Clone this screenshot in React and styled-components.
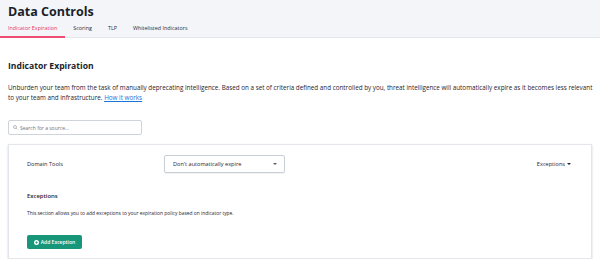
import React from 'react';
import styled, { createGlobalStyle } from 'styled-components';

const GlobalStyle = createGlobalStyle`
  body {
    margin: 0;
    background: #ffffff;
    font-family: "Open Sans", "Liberation Sans", sans-serif;
    color: #1f2430;
  }
`;

const Header = styled.header`
  background: #f3f5f9;
  border-bottom: 1px solid #e3e6eb;
  height: 38px;
  box-sizing: border-box;
  display: flex;
  flex-direction: column;
`;

const Title = styled.h1`
  margin: 0;
  padding: 3px 8px 0;
  height: 19px;
  font-size: 12.5px;
  line-height: 17px;
  font-weight: 700;
  color: #1b1f2a;
`;

const Tabs = styled.nav`
  display: flex;
  align-items: stretch;
  height: 16px;
  margin-top: auto;
`;

const Tab = styled.div`
  padding: 0 8px;
  font-size: 5.4px;
  line-height: 15px;
  color: ${p => (p.$active ? '#e8365d' : '#2a2f3a')};
  border-bottom: 2px solid ${p => (p.$active ? '#ef4d72' : 'transparent')};
  margin-bottom: -1px;
`;

const Main = styled.main`
  padding: 0 8px;
`;

const SectionTitle = styled.h2`
  margin: 22px 0 0;
  font-size: 8.6px;
  line-height: 12px;
  font-weight: 700;
  color: #1b1f2a;
`;

const Intro = styled.p`
  margin: 11px -4px 0 0;
  font-size: 6.3px;
  line-height: 10px;
  color: #1f2430;
`;

const Link = styled.a`
  color: #1a73d9;
  text-decoration: underline;
`;

const Search = styled.label`
  margin-top: 17px;
  width: 134px;
  height: 15px;
  box-sizing: border-box;
  border: 1px solid #cfd4db;
  border-radius: 2px;
  display: flex;
  align-items: center;
  gap: 2px;
  padding: 0 4px;
  font-size: 5px;
  color: #6b7280;
`;

const Card = styled.section`
  margin-top: 9px;
  width: 584px;
  height: 115px;
  box-sizing: border-box;
  border: 1px solid #e3e6ea;
  box-shadow: 0 1px 2px rgba(0, 0, 0, 0.18);
  padding: 10px 18px 0;
`;

const Row = styled.div`
  display: flex;
  align-items: center;
  height: 18px;
`;

const Label = styled.div`
  width: 137px;
  font-size: 5.6px;
  color: #1f2430;
`;

const Select = styled.div`
  width: 121px;
  height: 18px;
  box-sizing: border-box;
  border: 1px solid #c8ced6;
  border-radius: 2px;
  display: flex;
  align-items: center;
  justify-content: space-between;
  padding: 0 7px 0 8px;
  font-size: 5.6px;
  color: #1f2430;
  box-shadow: 0 1px 1px rgba(0, 0, 0, 0.06);
`;

const Caret = styled.span`
  width: 0;
  height: 0;
  border-left: 2px solid transparent;
  border-right: 2px solid transparent;
  border-top: 2px solid ${p => p.$color || '#555b66'};
`;

const Toggle = styled.div`
  margin-left: auto;
  margin-right: 2px;
  display: flex;
  align-items: center;
  gap: 2px;
  font-size: 5.6px;
  color: #1f2430;
`;

const SubTitle = styled.h3`
  margin: 19px 0 0;
  font-size: 5.9px;
  line-height: 9px;
  font-weight: 600;
  color: #1f2430;
`;

const SubText = styled.p`
  margin: 8px 0 0;
  font-size: 4.9px;
  line-height: 8px;
  color: #1f2430;
`;

const Button = styled.button`
  margin-top: 18px;
  height: 14px;
  width: 55px;
  box-sizing: border-box;
  border: none;
  border-radius: 2px;
  background: #17967a;
  color: #fff;
  font-family: inherit;
  font-size: 5px;
  font-weight: 600;
  display: flex;
  align-items: center;
  justify-content: center;
  gap: 2px;
  padding: 0;
`;

const PlusIcon = () => (
  <svg width="5" height="5" viewBox="0 0 10 10">
    <circle cx="5" cy="5" r="5" fill="#fff" />
    <path d="M5 2.5v5M2.5 5h5" stroke="#17967a" strokeWidth="1.5" />
  </svg>
);

const SearchIcon = () => (
  <svg width="5" height="5" viewBox="0 0 10 10">
    <circle cx="4" cy="4" r="3" fill="none" stroke="#8a9099" strokeWidth="1.2" />
    <path d="M6.3 6.3L9 9" stroke="#8a9099" strokeWidth="1.2" />
  </svg>
);

export default function App() {
  return (
    <>
      <GlobalStyle />
      <Header>
        <Title>Data Controls</Title>
        <Tabs>
          <Tab $active>Indicator Expiration</Tab>
          <Tab>Scoring</Tab>
          <Tab>TLP</Tab>
          <Tab>Whitelisted Indicators</Tab>
        </Tabs>
      </Header>
      <Main>
        <SectionTitle>Indicator Expiration</SectionTitle>
        <Intro>
          Unburden your team from the task of manually deprecating intelligence. Based on a set of criteria defined and
          controlled by you, threat intelligence will automatically expire as it becomes less relevant to your team and
          infrastructure. <Link href="#">How it works</Link>
        </Intro>
        <Search>
          <SearchIcon />
          Search for a source...
        </Search>
        <Card>
          <Row>
            <Label>Domain Tools</Label>
            <Select>
              Don't automatically expire
              <Caret />
            </Select>
            <Toggle>
              Exceptions
              <Caret $color="#1f2430" />
            </Toggle>
          </Row>
          <SubTitle>Exceptions</SubTitle>
          <SubText>This section allows you to add exceptions to your expiration policy based on indicator type.</SubText>
          <Button>
            <PlusIcon />
            Add Exception
          </Button>
        </Card>
      </Main>
    </>
  );
}
